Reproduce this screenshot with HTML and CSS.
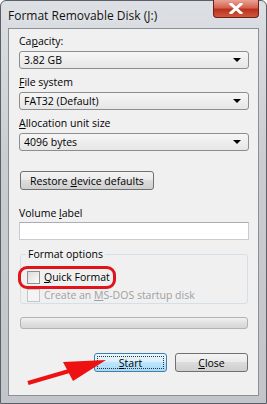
FILE: index.html
```html
<!DOCTYPE html>
<html>
<head>
    <title>Format Removable Disk (J:)</title>
    <link rel="stylesheet" href="styles.css">
</head>
<body>
    <div class="window">
        <div class="titlebar">
            <span class="title">Format Removable Disk (J:)</span>
            <div class="close">
                <svg width="14" height="11" viewBox="0 0 14 11">
                    <path d="M2 1 L12 10 M12 1 L2 10" stroke="#fff" stroke-width="3" stroke-linecap="square"/>
                </svg>
            </div>
        </div>

        <div class="client">
            <div class="label first">Ca<u>p</u>acity:</div>
            <div class="select"><span>3.82 GB</span><span class="caret"></span></div>

            <div class="label"><u>F</u>ile system</div>
            <div class="select"><span>FAT32 (Default)</span><span class="caret"></span></div>

            <div class="label"><u>A</u>llocation unit size</div>
            <div class="select"><span>4096 bytes</span><span class="caret"></span></div>

            <div class="btn restore"><span>Restore <u>d</u>evice defaults</span></div>

            <div class="label volume">Volume <u>l</u>abel</div>
            <div class="textbox"></div>

            <div class="group">
                <div class="legend">Format options</div>
                <div class="check-row highlight">
                    <span class="checkbox"></span>
                    <span><u>Q</u>uick Format</span>
                </div>
                <div class="check-row disabled">
                    <span class="checkbox"></span>
                    <span>Create an <u>M</u>S-DOS startup disk</span>
                </div>
            </div>

            <div class="progress"></div>

            <div class="actions">
                <div class="btn default"><span class="focus"><span><u>S</u>tart</span></span></div>
                <div class="btn"><span><u>C</u>lose</span></div>
            </div>
        </div>

        <!-- red annotation arrow -->
        <svg class="pointer" width="267" height="404" viewBox="0 0 267 404">
            <line x1="28" y1="383" x2="76" y2="369" stroke="#ee1111" stroke-width="4"/>
            <polygon points="106,360 63,362 73,381" fill="#ee1111"/>
        </svg>
    </div>
</body>
</html>
```

FILE: styles.css
```css
body {
    margin: 0;
    font-family: "Open Sans", "Noto Sans", sans-serif;
    font-size: 10.5px;
    color: #000;
}

.window {
    position: relative;
    width: 267px;
    height: 404px;
    box-sizing: border-box;
    border: 1px solid #5c6066;
    border-radius: 6px 6px 0 0;
    background: linear-gradient(180deg, #dcdfe3, #c9cdd2 40%, #c2c6cb);
}

.titlebar {
    display: flex;
    justify-content: space-between;
    align-items: flex-start;
    height: 27px;
    padding-left: 7px;
}

.title {
    margin-top: 6px;
    font-size: 12px;
    color: #111;
    text-shadow: 0 0 6px rgba(255, 255, 255, 0.9);
}

.close {
    display: flex;
    justify-content: center;
    align-items: center;
    width: 44px;
    height: 17px;
    margin-right: 7px;
    margin-top: -1px;
    border: 1px solid #6b2117;
    border-top: none;
    border-radius: 0 0 4px 4px;
    background: linear-gradient(180deg, #e9a395, #d5634f 45%, #b8321d 55%, #d0583c);
}

.client {
    margin: 0 7px;
    height: 368px;
    box-sizing: border-box;
    border: 1px solid #8b9097;
    background: #f0f0f0;
    padding: 0 9px 0 10px;
    display: flex;
    flex-direction: column;
}

.label {
    height: 15px;
    line-height: 15px;
    margin-top: 6px;
    margin-bottom: 2px;
}

.label.first {
    margin-top: 5px;
}

.label.volume {
    margin-top: 16px;
    margin-bottom: 1px;
}

.select {
    height: 18px;
    box-sizing: border-box;
    border: 1px solid #8d8d8d;
    border-radius: 3px;
    background: linear-gradient(180deg, #f6f6f6, #e6e6e6);
    display: flex;
    align-items: center;
    justify-content: space-between;
    padding: 0 7px 0 4px;
}

.caret {
    width: 0;
    height: 0;
    border-left: 4px solid transparent;
    border-right: 4px solid transparent;
    border-top: 4px solid #000;
}

.btn {
    display: flex;
    justify-content: center;
    align-items: center;
    height: 19px;
    box-sizing: border-box;
    border: 1px solid #707070;
    border-radius: 3px;
    background: linear-gradient(180deg, #f3f3f3, #ebebeb 45%, #dcdcdc 50%, #cfcfcf);
}

.restore {
    align-self: flex-start;
    width: 134px;
    margin-top: 20px;
    margin-left: 1px;
}

.textbox {
    height: 18px;
    box-sizing: border-box;
    border: 1px solid #c8ccd2;
    border-top-color: #abadb3;
    background: #fff;
}

.group {
    position: relative;
    display: flex;
    flex-direction: column;
    margin: 14px 1px 0 1px;
    height: 50px;
    box-sizing: border-box;
    border: 1px solid #d5dfe5;
    border-radius: 3px;
    padding: 14px 0 0 6px;
}

.legend {
    position: absolute;
    top: -8px;
    left: 5px;
    padding: 0 2px;
    line-height: 15px;
    background: #f0f0f0;
}

.check-row {
    display: flex;
    align-items: center;
    gap: 4px;
    height: 15px;
    line-height: 15px;
}

.checkbox {
    width: 13px;
    height: 13px;
    box-sizing: border-box;
    border: 1px solid #8e8f8f;
    background: linear-gradient(135deg, #dcdcdc, #fbfbfb);
}

.highlight {
    align-self: flex-start;
    margin: -3px 0 -1px -9px;
    padding: 1px 3px 1px 6px;
    border: 3px solid #e2141b;
    border-radius: 9px;
}

.disabled {
    color: #a0a0a0;
}

.disabled .checkbox {
    border-color: #c5c6c6;
    background: #f4f4f4;
}

.progress {
    margin: 13px 1px 0 1px;
    height: 12px;
    box-sizing: border-box;
    border: 1px solid #b2b2b2;
    border-radius: 3px;
    background: linear-gradient(180deg, #f2f2f2, #e0e0e0 50%, #d6d6d6);
}

.actions {
    display: flex;
    justify-content: flex-end;
    gap: 8px;
    margin-top: 24px;
    margin-right: 1px;
}

.actions .btn {
    width: 73px;
}

.btn.default {
    border-color: #3c7fb1;
    background: linear-gradient(180deg, #eaf6fd, #d9f0fc 45%, #bee6fd 50%, #a7d9f5);
    padding: 2px;
}

.focus {
    flex: 1;
    align-self: stretch;
    display: flex;
    justify-content: center;
    align-items: center;
    border: 1px dotted #333;
}

.pointer {
    position: absolute;
    top: -1px;
    left: -1px;
    pointer-events: none;
}
```
